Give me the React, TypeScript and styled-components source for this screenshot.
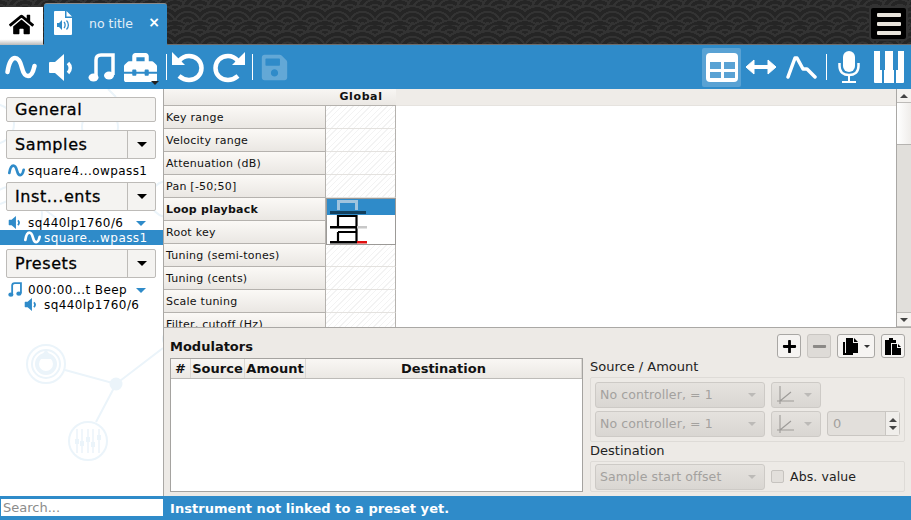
import React, { FC } from 'react'
import styled, { createGlobalStyle } from 'styled-components'
import { FaHome, FaToolbox, FaSave, FaPlus, FaMinus } from 'react-icons/fa'

const blue = '#2f8bc9'
const font_ui = "'DejaVu Sans', Verdana, sans-serif"
const wm = '#ebf4fa'

const GlobalStyle = createGlobalStyle`
  html, body { margin: 0; padding: 0; background: #fff; }
  * { box-sizing: border-box; }
`

const Sine: FC<{ size?: number; color?: string; stroke?: number }> = ({ size = 32, color = '#fff', stroke = 4.5 }) => (
  <svg width={size} height={size * 0.75} viewBox="0 0 32 24" fill="none">
    <path d="M2.500 17C4 7 7 3 10 3c4 0 6 6 7 10 1 4 3 8 6 8 3 0 5-3 6.500-10" stroke={color} strokeWidth={stroke} strokeLinecap="round" />
  </svg>
)

const Speaker: FC<{ w?: number; h?: number; color?: string }> = ({ w = 26, h = 27, color = '#fff' }) => (
  <svg width={w} height={h} viewBox="0 0 26 27">
    <path d="M1 9a1 1 0 0 1 1-1h5l9-8v27l-9-8H2a1 1 0 0 1-1-1z" fill={color} />
    <path d="M20 9c3 3 3 7 0 10" stroke={color} strokeWidth="3.500" fill="none" />
  </svg>
)

const Note: FC<{ w?: number; h?: number; color?: string }> = ({ w = 27, h = 29, color = '#fff' }) => (
  <svg width={w} height={h} viewBox="0 0 27 29" fill="none">
    <path d="M8 24V7C8 3 10 2 13 2h12v20" stroke={color} strokeWidth="3.500" />
    <ellipse cx="5.500" cy="24.500" rx="5" ry="4" fill={color} />
    <ellipse cx="21" cy="22.500" rx="5" ry="4" fill={color} />
  </svg>
)

const UndoIcon: FC<{ flip?: boolean }> = ({ flip }) => (
  <UndoSvg $flip={flip} width="32" height="31" viewBox="0 0 32 31" fill="none">
    <path d="M7 9c2.500-3 6-5 10-5 7 0 12.500 5 12.500 12S24 28 17 28c-4 0-7-1.500-10-4" stroke="#fff" strokeWidth="4.500" />
    <path d="M0 0v13h13z" fill="#fff" />
  </UndoSvg>
)

const TableIcon: FC = () => (
  <svg width="32" height="29" viewBox="0 0 32 29">
    <rect width="32" height="29" rx="4" fill="#fff" />
    <rect x="4" y="9" width="11" height="7" fill="#59a2d4" />
    <rect x="18" y="9" width="11" height="7" fill="#59a2d4" />
    <rect x="4" y="19" width="11" height="6" fill="#59a2d4" />
    <rect x="18" y="19" width="11" height="6" fill="#59a2d4" />
  </svg>
)

const ArrowsIcon: FC = () => (
  <svg width="32" height="16" viewBox="0 0 32 16" fill="none">
    <path d="M5 8h22" stroke="#fff" strokeWidth="4" />
    <path d="M9 1L1 8l8 7zM23 1l8 7-8 7z" fill="#fff" stroke="#fff" strokeLinejoin="round" />
  </svg>
)

const FilterIcon: FC = () => (
  <svg width="31" height="24" viewBox="0 0 31 24" fill="none">
    <path d="M2 22L9 3h2l6 11h4l8 8" stroke="#fff" strokeWidth="3.500" strokeLinecap="round" strokeLinejoin="round" />
  </svg>
)

const MicIcon: FC = () => (
  <svg width="22" height="32" viewBox="0 0 22 32" fill="none">
    <rect x="5" y="0" width="12" height="21" rx="6" fill="#fff" />
    <path d="M1.500 12v3c0 6 4 9 9.500 9s9.500-3 9.500-9v-3" stroke="#fff" strokeWidth="2.500" />
    <path d="M11 24v6M4 31h14" stroke="#fff" strokeWidth="2" />
  </svg>
)

const PianoIcon: FC = () => (
  <svg width="32" height="32" viewBox="0 0 32 32">
    <path d="M1 0h6v19h2v13H2a1 1 0 0 1-1-1zM12 0h8v19h1v13H11V19h1zM25 0h6v31a1 1 0 0 1-1 1h-7V19h2z" fill="#fff" />
  </svg>
)

const FileIcon: FC = () => (
  <svg width="18" height="24" viewBox="0 0 18 24">
    <path d="M1 0h10v7h7v16a1 1 0 0 1-1 1H1a1 1 0 0 1-1-1V1a1 1 0 0 1 1-1zM12.500 0L18 5.500h-5.500z" fill="#fff" />
    <path d="M3 12h2l3-3v10l-3-3H3z" fill={blue} />
    <path d="M10 11c1.500 1.500 1.500 4.500 0 6M12.500 9.500c2.500 2.500 2.500 6.500 0 9" stroke={blue} strokeWidth="1.300" fill="none" />
  </svg>
)

const CopyIcon: FC = () => (
  <svg width="16" height="17" viewBox="0 0 16 17">
    <path d="M0 4h2v11h8v2H0z" fill="#000" />
    <path d="M3 0h7v5h5v10H3zM11 0l4 4h-4z" fill="#000" />
  </svg>
)

const PasteIcon: FC = () => (
  <svg width="16" height="17" viewBox="0 0 16 17">
    <path d="M0 2h4V0h4v2h3v3H6v12H0z" fill="#000" />
    <path d="M7 6h5v4h4v7H7zM13 6l3 3h-3z" fill="#000" />
  </svg>
)

const CurveIcon: FC = () => (
  <svg width="17" height="18" viewBox="0 0 17 18" fill="none">
    <path d="M3 0v18M0 15h17M3 15L14 6" stroke="#9d9b98" strokeWidth="1.100" />
  </svg>
)

const Watermark: FC = () => (
  <WatermarkSvg viewBox="0 0 163 406" width="163" height="406" fill="none" stroke={wm} strokeWidth="2">
    <circle cx="46" cy="275" r="19" />
    <circle cx="46" cy="275" r="14" />
    <circle cx="46" cy="275" r="9" strokeWidth="4" />
    <path d="M46 262l5 7H41z" fill={wm} />
    <path d="M65 281l51 14 47-36" />
    <circle cx="116" cy="295" r="5.500" fill={wm} />
    <path d="M116 295L96 333" />
    <circle cx="88" cy="352" r="19" />
    <path d="M77 340v24M82 340v24M88 340v24M93 340v24M99 340v24" strokeWidth="1.500" />
    <path d="M77 350v5M82 352v5M88 348v5M93 353v5M99 346v5" strokeWidth="4" />
    <circle cx="172" cy="250" r="9" fill={wm} />
    <circle cx="-6" cy="35" r="20" />
    <path d="M108 0l8 8M0 115l24-10 40 30" />
    <circle cx="100" cy="38" r="18" />
    <circle cx="14" cy="125" r="28" />
    <circle cx="168" cy="110" r="18" />
  </WatermarkSvg>
)

const labels = [
  'Key range',
  'Velocity range',
  'Attenuation (dB)',
  'Pan [-50;50]',
  'Loop playback',
  'Root key',
  'Tuning (semi-tones)',
  'Tuning (cents)',
  'Scale tuning',
  'Filter, cutoff (Hz)',
]

const LoopPopup: FC = () => (
  <Popup>
    <svg width="68" height="45" viewBox="0 0 68 45">
      <rect width="68" height="16" fill={blue} />
      <path d="M11.500 11V2.500h18V11" stroke="#9fc4de" strokeWidth="3" fill="none" />
      <rect x="3" y="12" width="36" height="3" fill="#123f5c" />
      <path d="M11 28V17h18.500v26M11 33h18.500" stroke="#000" strokeWidth="2.200" fill="none" />
      <rect x="3" y="27" width="27" height="2.500" fill="#000" />
      <rect x="30" y="27" width="10" height="2.500" fill="#c8c8c8" />
      <path d="M11 33v9" stroke="#000" strokeWidth="2.200" />
      <rect x="3" y="42" width="27" height="2.500" fill="#000" />
      <rect x="30" y="42" width="10" height="2.500" fill="#e01010" />
    </svg>
  </Popup>
)

const Combo: FC<{ text: string }> = ({ text }) => (
  <ComboBox>
    {text}
    <Caret />
  </ComboBox>
)

const CurveCombo: FC = () => (
  <CurveBox>
    <CurveIcon />
    <Caret />
  </CurveBox>
)

const App: FC = () => (
  <Page>
    <GlobalStyle />
    <TopBar>
      <HomeTab>
        <FaHome size={25} color="#000" />
      </HomeTab>
      <FileTab>
        <FileIcon />
        <TabTitle>no title</TabTitle>
        <TabClose>×</TabClose>
      </FileTab>
      <MenuButton>
        <span />
        <span />
        <span />
      </MenuButton>
    </TopBar>

    <Toolbar>
      <Tool $ml={5}><Sine /></Tool>
      <Tool $ml={11}><Speaker /></Tool>
      <Tool $ml={14}><Note /></Tool>
      <Tool $ml={9}>
        <FaToolbox size={33} color="#fff" />
        <ToolCaret />
      </Tool>
      <Separator $ml={9} />
      <Tool $ml={5}><UndoIcon /></Tool>
      <Tool $ml={9}><UndoIcon flip /></Tool>
      <Separator $ml={7} />
      <Tool $ml={7}><FaSave size={29} color="#fff" opacity={0.25} /></Tool>
      <Spacer />
      <ActiveTool><TableIcon /></ActiveTool>
      <Tool $ml={4}><ArrowsIcon /></Tool>
      <Tool $ml={9}><FilterIcon /></Tool>
      <Separator $ml={9} />
      <Tool $ml={11}><MicIcon /></Tool>
      <Tool $ml={13} $mr={6}><PianoIcon /></Tool>
    </Toolbar>

    <Body>
      <Sidebar>
        <Watermark />
        <SectionButton>General</SectionButton>
        <SectionSplit $mt={8}>
          <span>Samples</span>
          <SplitArrow />
        </SectionSplit>
        <TreeRow $mt={4}>
          <TreeIcon><Sine size={17} color={blue} stroke={5} /></TreeIcon>
          <span>square4...owpass1</span>
        </TreeRow>
        <SectionSplit $mt={4}>
          <span>Inst...ents</span>
          <SplitArrow />
        </SectionSplit>
        <TreeRow $mt={4}>
          <TreeIcon><Speaker w={13} h={13} color={blue} /></TreeIcon>
          <span>sq440lp1760/6</span>
          <Expand />
        </TreeRow>
        <TreeRow $indent $selected>
          <TreeIcon><Sine size={17} stroke={5} /></TreeIcon>
          <span>square...wpass1</span>
        </TreeRow>
        <SectionSplit $mt={4}>
          <span>Presets</span>
          <SplitArrow />
        </SectionSplit>
        <TreeRow $mt={4}>
          <TreeIcon><Note w={14} h={15} color={blue} /></TreeIcon>
          <span>000:00...t Beep</span>
          <Expand />
        </TreeRow>
        <TreeRow $indent>
          <TreeIcon><Speaker w={13} h={13} color={blue} /></TreeIcon>
          <span>sq440lp1760/6</span>
        </TreeRow>
      </Sidebar>

      <Content>
        <TableArea>
          <TableScroll>
            <HeaderRow>
              <HeaderCorner />
              <HeaderGlobal>Global</HeaderGlobal>
            </HeaderRow>
            {labels.map((label, i) => (
              <Row key={label}>
                <RowLabel $bold={i === 4}>{label}</RowLabel>
                <RowCell>{i === 4 && <LoopPopup />}</RowCell>
              </Row>
            ))}
          </TableScroll>
          <ScrollBar>
            <ScrollButton><ArrowUp /></ScrollButton>
            <ScrollThumb />
            <ScrollTrack />
            <ScrollButton><ArrowDown /></ScrollButton>
          </ScrollBar>
        </TableArea>

        <Modulators>
          <ModHeader>
            <ModTitle>Modulators</ModTitle>
            <ActionButton><FaPlus size={15} color="#000" /></ActionButton>
            <ActionButton $disabled><FaMinus size={15} color="#8b8986" /></ActionButton>
            <CopyButton>
              <CopyIcon />
              <SmallCaret />
            </CopyButton>
            <ActionButton><PasteIcon /></ActionButton>
          </ModHeader>
          <ModGrid>
            <ModTable>
              <ModTableHead>
                <ModCol $w={20}>#</ModCol>
                <ModCol $w={54}>Source</ModCol>
                <ModCol $w={61}>Amount</ModCol>
                <ModCol $grow>Destination</ModCol>
              </ModTableHead>
            </ModTable>
            <ModSide>
              <GroupLabel>Source / Amount</GroupLabel>
              <Group>
                <GroupRow>
                  <Combo text="No controller, = 1" />
                  <CurveCombo />
                </GroupRow>
                <GroupRow>
                  <Combo text="No controller, = 1" />
                  <CurveCombo />
                  <Spin>
                    0
                    <SpinArrows>
                      <ArrowUp />
                      <ArrowDown />
                    </SpinArrows>
                  </Spin>
                </GroupRow>
              </Group>
              <GroupLabel>Destination</GroupLabel>
              <DestGroup>
                <Combo text="Sample start offset" />
                <Check />
                <CheckLabel>Abs. value</CheckLabel>
              </DestGroup>
            </ModSide>
          </ModGrid>
        </Modulators>
      </Content>
    </Body>

    <StatusBar>
      <Search placeholder="Search..." />
      <StatusText>Instrument not linked to a preset yet.</StatusText>
    </StatusBar>
  </Page>
)

export default App

const Page = styled.div`
  width: 911px;
  height: 520px;
  overflow: hidden;
  display: flex;
  flex-direction: column;
  font-family: ${font_ui};
  background: #fff;
`

const TopBar = styled.div`
  height: 45px;
  flex: none;
  display: flex;
  align-items: flex-end;
  position: relative;
  border-bottom: 1px solid #6d6d6d;
  background-color: #252525;
  background-image:
    radial-gradient(circle at 100% 150%, #252525 24%, #333 25%, #333 28%, #252525 29%, #252525 36%, #333 36%, #333 40%, transparent 40%, transparent),
    radial-gradient(circle at 0 150%, #252525 24%, #333 25%, #333 28%, #252525 29%, #252525 36%, #333 36%, #333 40%, transparent 40%, transparent),
    radial-gradient(circle at 50% 100%, #333 10%, #252525 11%, #252525 23%, #333 24%, #333 30%, #252525 31%, #252525 43%, #333 44%, #333 50%, #252525 51%, #252525 63%, #333 64%, #333 71%, transparent 71%, transparent),
    radial-gradient(circle at 100% 50%, #333 10%, #252525 11%, #252525 23%, #333 24%, #333 30%, #252525 31%, #252525 43%, #333 44%, #333 50%, #252525 51%, #252525 63%, #333 64%, #333 71%, transparent 71%, transparent),
    radial-gradient(circle at 0 50%, #333 10%, #252525 11%, #252525 23%, #333 24%, #333 30%, #252525 31%, #252525 43%, #333 44%, #333 50%, #252525 51%, #252525 63%, #333 64%, #333 71%, transparent 71%, transparent);
  background-size: 25px 25px;
`

const HomeTab = styled.div`
  width: 43px;
  height: 38px;
  margin-bottom: -1px;
  display: flex;
  align-items: center;
  justify-content: center;
  background: linear-gradient(#fff 85%, #b9b9b9);
  padding-bottom: 3px;
`

const FileTab = styled.div`
  width: 123px;
  height: 42px;
  margin-left: 1px;
  margin-bottom: -1px;
  padding-left: 10px;
  padding-bottom: 3px;
  display: flex;
  align-items: center;
  background: ${blue};
  border-top: 1px solid #8a8a8a;
  border-radius: 3px 3px 0 0;
  position: relative;
`

const TabTitle = styled.span`
  margin-left: 17px;
  font-size: 12.5px;
  color: #e3eff7;
  padding-top: 1px;
`

const TabClose = styled.span`
  position: absolute;
  right: 7px;
  top: 9px;
  font-size: 14px;
  line-height: 18px;
  font-weight: bold;
  color: #fff;
`

const MenuButton = styled.div`
  position: absolute;
  right: 3px;
  top: 6px;
  width: 39px;
  height: 35px;
  background: #000;
  border: 2px solid #333;
  border-radius: 4px;
  display: flex;
  flex-direction: column;
  justify-content: center;
  align-items: center;
  gap: 5px;

  span {
    width: 24px;
    height: 4px;
    background: #e9e5dd;
    border-radius: 1px;
  }
`

const Toolbar = styled.div`
  height: 44px;
  flex: none;
  display: flex;
  align-items: center;
  background: ${blue};
`

const Tool = styled.div<{ $ml?: number; $mr?: number }>`
  margin-left: ${p => p.$ml ?? 0}px;
  margin-right: ${p => p.$mr ?? 0}px;
  display: flex;
  align-items: center;
  position: relative;
`

const UndoSvg = styled.svg<{ $flip?: boolean }>`
  transform: ${p => (p.$flip ? 'scaleX(-1)' : 'none')};
`

const ToolCaret = styled.span`
  position: absolute;
  right: -2px;
  bottom: -1px;
  width: 0;
  height: 0;
  border-left: 4px solid transparent;
  border-right: 4px solid transparent;
  border-top: 4px solid #222;
`

const Separator = styled.div<{ $ml: number }>`
  margin-left: ${p => p.$ml}px;
  width: 1px;
  height: 26px;
  background: #fff;
`

const Spacer = styled.div`
  flex: 1;
`

const ActiveTool = styled.div`
  width: 39px;
  height: 39px;
  display: flex;
  align-items: center;
  justify-content: center;
  background: #59a2d4;
  border-radius: 2px;
`

const Body = styled.div`
  flex: 1;
  min-height: 0;
  display: flex;
`

const Sidebar = styled.div`
  width: 163px;
  flex: none;
  padding-top: 8px;
  position: relative;
  display: flex;
  flex-direction: column;
  align-items: flex-start;
`

const WatermarkSvg = styled.svg`
  position: absolute;
  left: 0;
  top: 0;
`

const SectionButton = styled.div`
  position: relative;
  margin-left: 6px;
  width: 150px;
  height: 25px;
  padding-left: 8px;
  display: flex;
  align-items: center;
  font-size: 16px;
  letter-spacing: 0.6px;
  -webkit-text-stroke: 0.3px #000;
  color: #000;
  background: #f4f3f1;
  border: 1px solid #bdbbb8;
  border-radius: 2px;
`

const SectionSplit = styled(SectionButton)<{ $mt: number }>`
  margin-top: ${p => p.$mt}px;
  height: 29px;
  justify-content: space-between;
  padding-right: 0;
`

const SplitArrow = styled.span`
  width: 28px;
  height: 100%;
  border-left: 1px solid #bdbbb8;
  display: flex;
  align-items: center;
  justify-content: center;

  &::after {
    content: '';
    border-left: 5px solid transparent;
    border-right: 5px solid transparent;
    border-top: 5px solid #000;
  }
`

const TreeRow = styled.div<{ $indent?: boolean; $selected?: boolean; $mt?: number }>`
  position: relative;
  width: 100%;
  height: 15px;
  margin-top: ${p => p.$mt ?? 0}px;
  padding-left: ${p => (p.$indent ? 24 : 8)}px;
  display: flex;
  align-items: center;
  font-size: 12px;
  letter-spacing: 0.42px;
  color: ${p => (p.$selected ? '#fff' : '#000')};
  background: ${p => (p.$selected ? blue : 'transparent')};
`

const TreeIcon = styled.span`
  width: 20px;
  flex: none;
  display: flex;
  align-items: center;
`

const Expand = styled.span`
  position: absolute;
  left: 136px;
  top: 6px;
  border-left: 5px solid transparent;
  border-right: 5px solid transparent;
  border-top: 5px solid ${blue};
`

const Content = styled.div`
  flex: 1;
  min-width: 0;
  display: flex;
  flex-direction: column;
  border-left: 1px solid #aaa8a5;
`

const TableArea = styled.div`
  height: 239px;
  flex: none;
  display: flex;
  border-bottom: 1px solid #aaa8a5;
  background: #fff;
`

const TableScroll = styled.div`
  flex: 1;
  min-width: 0;
  overflow: hidden;
`

const HeaderRow = styled.div`
  height: 17px;
  display: flex;
  background: #efece8;
  border-bottom: 1px solid #e6e3df;
`

const HeaderCorner = styled.div`
  width: 162px;
  background: linear-gradient(#f8f6f3, #ebe8e4);
  border-bottom: 1px solid #b5b2ae;
  margin-bottom: -1px;
`

const HeaderGlobal = styled.div`
  width: 70px;
  text-align: center;
  font-size: 11px;
  font-weight: bold;
  letter-spacing: 0.6px;
  line-height: 16px;
  color: #111;
  background: linear-gradient(#f8f6f3, #ebe8e4);
  border-bottom: 1px solid #b5b2ae;
  margin-bottom: -1px;
`

const Row = styled.div`
  height: 23px;
  display: flex;
`

const RowLabel = styled.div<{ $bold?: boolean }>`
  width: 162px;
  padding-left: 2px;
  display: flex;
  align-items: center;
  font-size: 11px;
  letter-spacing: 0.25px;
  font-weight: ${p => (p.$bold ? 'bold' : 'normal')};
  color: #111;
  background: linear-gradient(#fbf9f6, #eae7e3);
  border-bottom: 1px solid #b5b2ae;
  border-right: 1px solid #b5b2ae;
`

const RowCell = styled.div`
  position: relative;
  width: 70px;
  border-bottom: 1px solid #e4e2df;
  border-right: 1px solid #b5b2ae;
  background: repeating-linear-gradient(135deg, #fff 0 3px, #f3f3f3 3px 4px);
`

const Popup = styled.div`
  position: absolute;
  left: 0;
  top: 0;
  width: 70px;
  height: 47px;
  background: #fff;
  border: 1px solid #9c9a97;
  z-index: 2;
  overflow: hidden;

  svg {
    display: block;
  }
`

const ScrollBar = styled.div`
  width: 15px;
  flex: none;
  display: flex;
  flex-direction: column;
  border-left: 1px solid #aaa8a5;
`

const ScrollButton = styled.div`
  height: 14px;
  flex: none;
  display: flex;
  align-items: center;
  justify-content: center;
  background: #f4f2ef;
  border-bottom: 1px solid #bdbbb8;
`

const ScrollThumb = styled.div`
  height: 42px;
  flex: none;
  background: linear-gradient(90deg, #fff, #efedea);
  border-bottom: 1px solid #b5b3b0;
`

const ScrollTrack = styled.div`
  flex: 1;
  background: #e1dfdb;
  border-bottom: 1px solid #bdbbb8;
`

const ArrowUp = styled.span`
  display: block;
  border-left: 4px solid transparent;
  border-right: 4px solid transparent;
  border-bottom: 4px solid #444;
`

const ArrowDown = styled.span`
  display: block;
  border-left: 4px solid transparent;
  border-right: 4px solid transparent;
  border-top: 4px solid #444;
`

const Modulators = styled.div`
  flex: 1;
  min-height: 0;
  display: flex;
  flex-direction: column;
  padding: 6px 6px 3px 6px;
  background: #edeae6;
`

const ModHeader = styled.div`
  height: 24px;
  flex: none;
  display: flex;
  align-items: flex-end;
  gap: 6px;
`

const ModTitle = styled.div`
  flex: 1;
  align-self: flex-end;
  margin-bottom: 3px;
  font-size: 13px;
  font-weight: bold;
  line-height: 16px;
  color: #111;
`

const ActionButton = styled.div<{ $disabled?: boolean }>`
  width: 24px;
  height: 24px;
  display: flex;
  align-items: center;
  justify-content: center;
  background: ${p => (p.$disabled ? '#dedbd7' : '#f6f4f2')};
  border: 1px solid ${p => (p.$disabled ? '#c9c6c2' : '#a9a7a4')};
  border-radius: 3px;
`

const CopyButton = styled(ActionButton)`
  width: 38px;
  gap: 5px;
`

const SmallCaret = styled.span`
  border-left: 3px solid transparent;
  border-right: 3px solid transparent;
  border-top: 3px solid #333;
`

const ModGrid = styled.div`
  flex: 1;
  min-height: 0;
  display: grid;
  grid-template-columns: 413px 315px;
  column-gap: 7px;
`

const ModTable = styled.div`
  height: 134px;
  background: #fff;
  border: 1px solid #a5a3a0;
`

const ModTableHead = styled.div`
  height: 20px;
  display: flex;
  background: linear-gradient(#f9f7f4, #ebe8e4);
  border-bottom: 1px solid #bdbbb8;
`

const ModCol = styled.div<{ $w?: number; $grow?: boolean }>`
  width: ${p => (p.$w ? `${p.$w}px` : 'auto')};
  flex: ${p => (p.$grow ? 1 : 'none')};
  text-align: center;
  font-size: 13px;
  font-weight: bold;
  line-height: 20px;
  white-space: nowrap;
  color: #111;
  border-right: 1px solid #dbd8d4;
`

const ModSide = styled.div`
  display: flex;
  flex-direction: column;
`

const GroupLabel = styled.div`
  height: 19px;
  font-size: 13px;
  line-height: 18px;
  color: #222;
`

const Group = styled.div`
  height: 65px;
  padding: 3px 4px;
  display: flex;
  flex-direction: column;
  gap: 2px;
  border: 1px solid #dedbd7;
  border-radius: 2px;
`

const GroupRow = styled.div`
  height: 27px;
  display: flex;
  align-items: center;
  gap: 6px;
`

const DestGroup = styled.div`
  height: 31px;
  padding: 0 4px;
  display: flex;
  align-items: center;
  border: 1px solid #dedbd7;
  border-radius: 2px;
`

const ComboBox = styled.div`
  width: 170px;
  height: 26px;
  flex: none;
  padding: 0 8px 0 4px;
  display: flex;
  align-items: center;
  justify-content: space-between;
  font-size: 12.5px;
  letter-spacing: 0.1px;
  color: #a3a19e;
  background: linear-gradient(#e5e2de, #d9d6d2);
  border: 1px solid #cdcac6;
  border-radius: 3px;
`

const CurveBox = styled(ComboBox)`
  width: 50px;
  padding: 0 8px 0 5px;
`

const Caret = styled.span`
  border-left: 4px solid transparent;
  border-right: 4px solid transparent;
  border-top: 4px solid #bcbab7;
`

const Spin = styled.div`
  width: 73px;
  height: 25px;
  display: flex;
  align-items: center;
  justify-content: space-between;
  padding-left: 5px;
  font-size: 13px;
  color: #a3a19e;
  background: #e2dfdb;
  border: 1px solid #c9c6c2;
  border-radius: 3px;
`

const SpinArrows = styled.div`
  width: 14px;
  height: 100%;
  display: flex;
  flex-direction: column;
  align-items: center;
  justify-content: center;
  gap: 4px;
  background: #f0eeeb;
  border-left: 1px solid #c9c6c2;
`

const Check = styled.div`
  width: 13px;
  height: 13px;
  margin-left: 6px;
  background: #e2dfdb;
  border: 1px solid #c6c3bf;
  border-radius: 2px;
`

const CheckLabel = styled.span`
  margin-left: 6px;
  font-size: 12.5px;
  letter-spacing: 0.1px;
  color: #222;
`

const StatusBar = styled.div`
  height: 24px;
  flex: none;
  display: flex;
  align-items: center;
  padding-left: 1px;
  background: ${blue};
`

const Search = styled.input`
  width: 162px;
  height: 17px;
  margin-bottom: 1px;
  padding: 0 2px;
  border: 0;
  outline: 0;
  background: #fff;
  font-family: ${font_ui};
  font-size: 13px;

  &::placeholder {
    color: #8c8c8c;
    opacity: 1;
  }
`

const StatusText = styled.span`
  margin-left: 7px;
  font-size: 13px;
  font-weight: bold;
  letter-spacing: 0.05px;
  color: #fff;
`
